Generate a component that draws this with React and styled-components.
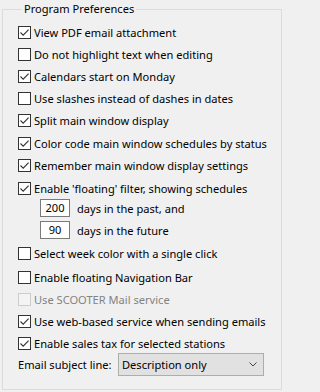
import React from 'react';
import styled, { createGlobalStyle } from 'styled-components';

const GlobalStyle = createGlobalStyle`
  html, body {
    margin: 0;
    padding: 0;
    background: #f0f0f0;
  }
  body {
    font-family: "Noto Sans", "Open Sans", sans-serif;
    font-size: 11.1px;
    color: #000;
  }
`;

const options = [
  { label: 'View PDF email attachment', checked: true },
  { label: 'Do not highlight text when editing' },
  { label: 'Calendars start on Monday', checked: true },
  { label: 'Use slashes instead of dashes in dates' },
  { label: 'Split main window display', checked: true },
  { label: 'Color code main window schedules by status', checked: true, mt: 1 },
  { label: 'Remember main window display settings', checked: true },
  { label: "Enable 'floating' filter, showing schedules", checked: true, mt: 1 },
];

const moreOptions = [
  { label: 'Select week color with a single click', mt: 2 },
  { label: 'Enable floating Navigation Bar', mt: 2 },
  { label: 'Use SCOOTER Mail service', disabled: true },
  { label: 'Use web-based service when sending emails', checked: true },
  { label: 'Enable sales tax for selected stations', checked: true },
];

const CheckMark = () => (
  <svg width="11" height="11" viewBox="0 0 11 11">
    <path d="M1.5 5.5 L4.2 8.2 L9.6 2.6" fill="none" stroke="#333" strokeWidth="1.1" />
  </svg>
);

const Chevron = () => (
  <svg width="8" height="5" viewBox="0 0 8 5">
    <path d="M0.5 0.5 L4 4 L7.5 0.5" fill="none" stroke="#444" strokeWidth="1" />
  </svg>
);

const CheckOption = ({ label, checked, disabled, mt }) => (
  <Row $mt={mt}>
    <Box $disabled={disabled}>{checked && <CheckMark />}</Box>
    <Label $disabled={disabled}>{label}</Label>
  </Row>
);

const DaysOption = ({ value, label, mt }) => (
  <NumberRow $mt={mt}>
    <NumberBox>{value}</NumberBox>
    <Label>{label}</Label>
  </NumberRow>
);

export default function App() {
  return (
    <>
      <GlobalStyle />
      <Group>
        <Legend>Program Preferences</Legend>
        <OptionList>
          {options.map((o) => (
            <CheckOption key={o.label} {...o} />
          ))}
          <DaysOption value="200" label="days in the past, and" mt={-3} />
          <DaysOption value="90" label="days in the future" />
          {moreOptions.map((o) => (
            <CheckOption key={o.label} {...o} />
          ))}
          <EmailRow>
            <span>Email subject line:</span>
            <Select>
              <span>Description only</span>
              <Chevron />
            </Select>
          </EmailRow>
        </OptionList>
      </Group>
    </>
  );
}

const Group = styled.fieldset`
  box-sizing: border-box;
  width: 280px;
  margin: 1px 0 0 2px;
  padding: 0 0 13px 15px;
  border: 1px solid #dcdcdc;
  min-width: 0;
`;

const Legend = styled.legend`
  margin-left: 4px;
  padding: 0 2px;
  line-height: 16px;
`;

const OptionList = styled.div`
  display: flex;
  flex-direction: column;
  padding-top: 5px;
`;

const Row = styled.div`
  display: flex;
  align-items: flex-start;
  height: 22px;
  margin-top: ${({ $mt }) => ($mt ? `${$mt}px` : '0')};
`;

const Box = styled.div`
  box-sizing: border-box;
  flex: none;
  width: 13px;
  height: 13px;
  margin-top: 4px;
  display: flex;
  align-items: center;
  justify-content: center;
  background: ${({ $disabled }) => ($disabled ? '#f4f4f4' : '#fff')};
  border: 1px solid ${({ $disabled }) => ($disabled ? '#cccccc' : '#333')};
`;

const Label = styled.span`
  margin-left: 3px;
  line-height: 21px;
  white-space: nowrap;
  color: ${({ $disabled }) => ($disabled ? '#838383' : '#000')};
`;

const NumberRow = styled.div`
  display: flex;
  align-items: center;
  height: 22px;
  padding-left: 22px;
  margin-top: ${({ $mt }) => ($mt ? `${$mt}px` : '0')};

  & > span {
    margin-left: 7px;
  }
`;

const NumberBox = styled.div`
  box-sizing: border-box;
  width: 30px;
  height: 18px;
  line-height: 16px;
  text-align: center;
  background: #fff;
  border: 1px solid #7a7a7a;
`;

const EmailRow = styled.div`
  display: grid;
  grid-template-columns: 100px 146px;
  align-items: center;
  height: 23px;
  margin-top: -2px;
  white-space: nowrap;
`;

const Select = styled.div`
  box-sizing: border-box;
  height: 23px;
  display: flex;
  align-items: center;
  justify-content: space-between;
  padding: 0 6px 0 3px;
  background: #e1e1e1;
  border: 1px solid #adadad;
`;
